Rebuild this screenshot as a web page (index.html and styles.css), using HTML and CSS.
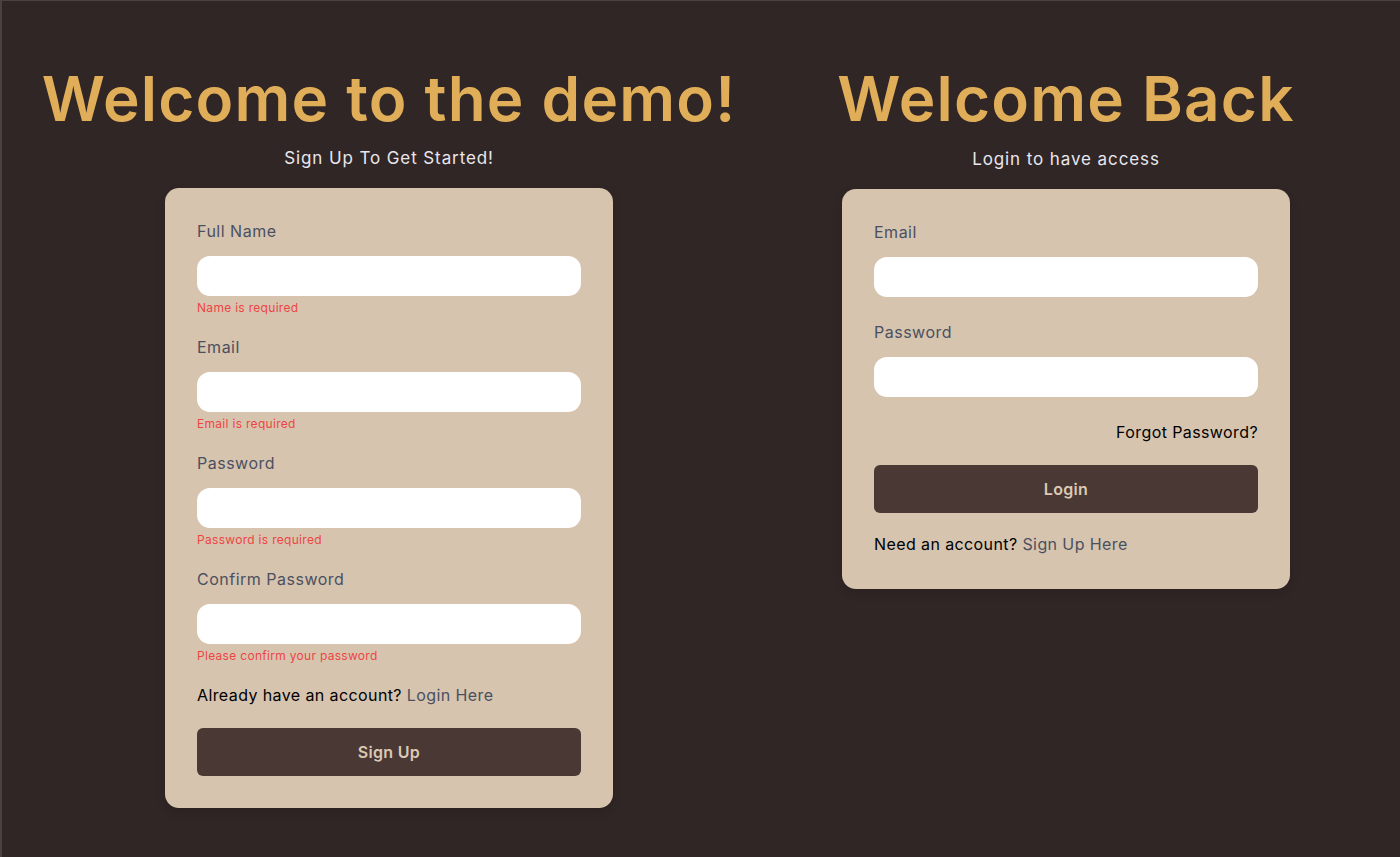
FILE: index.html
```html
<!DOCTYPE html>
<html lang="en">
<head>
<meta charset="utf-8">
<title>Auth Demo</title>
<link rel="stylesheet" href="styles.css">
</head>
<body>
<main class="page">
  <section class="col col-left">
    <h1 class="title">Welcome to the demo!</h1>
    <p class="subtitle">Sign Up To Get Started!</p>
    <form class="card">
      <div class="field">
        <label class="label">Full Name</label>
        <input class="input" type="text">
        <p class="error">Name is required</p>
      </div>
      <div class="field">
        <label class="label">Email</label>
        <input class="input" type="email">
        <p class="error">Email is required</p>
      </div>
      <div class="field">
        <label class="label">Password</label>
        <input class="input" type="password">
        <p class="error">Password is required</p>
      </div>
      <div class="field">
        <label class="label">Confirm Password</label>
        <input class="input" type="password">
        <p class="error">Please confirm your password</p>
      </div>
      <p class="switch">Already have an account? <a class="link" href="#">Login Here</a></p>
      <button class="btn" type="button">Sign Up</button>
    </form>
  </section>
  <section class="col col-right">
    <h1 class="title">Welcome Back</h1>
    <p class="subtitle">Login to have access</p>
    <form class="card">
      <div class="field field-plain">
        <label class="label">Email</label>
        <input class="input" type="email">
      </div>
      <div class="field field-plain">
        <label class="label">Password</label>
        <input class="input" type="password">
      </div>
      <p class="forgot">Forgot Password?</p>
      <button class="btn" type="button">Login</button>
      <p class="switch switch-bottom">Need an account? <a class="link" href="#">Sign Up Here</a></p>
    </form>
  </section>
</main>
</body>
</html>
```

FILE: styles.css
```css
* { box-sizing: border-box; }
html, body { margin: 0; padding: 0; }
body {
  background: #302625;
  font-family: "Inter", "Open Sans", sans-serif;
  height: 857px;
  overflow: hidden;
  border-left: 2px solid #4a4240;
  border-top: 1px solid #4a4240;
}
.page {
  display: flex;
  align-items: flex-start;
  padding-left: 40px;
}
.col {
  display: flex;
  flex-direction: column;
  align-items: center;
}
.col-left { width: 694px; }
.col-right { width: 460px; margin-left: 100px; }
.title {
  margin: 51px 0 0;
  font-size: 62px;
  line-height: 94px;
  font-weight: 600;
  color: #e0ad59;
  white-space: nowrap;
  letter-spacing: 1.2px;
}
.subtitle {
  margin: 0;
  font-size: 17px;
  line-height: 24px;
  letter-spacing: 0.9px;
  color: #e9e6ee;
}
.col-right .subtitle { margin-top: 1px; }
.card {
  margin-top: 18px;
  width: 448px;
  background: #d6c4af;
  border-radius: 14px;
  padding: 31px 32px 32px;
  box-shadow: 0 4px 10px rgba(0,0,0,0.15);
  display: flex;
  flex-direction: column;
}
.col-right .card { padding-bottom: 33px; }
.field {
  display: flex;
  flex-direction: column;
  margin-bottom: 19px;
}
.field-plain { margin-bottom: 23px; }
.label {
  font-size: 16px;
  line-height: 24px;
  letter-spacing: 0.5px;
  color: #4b5060;
  margin-bottom: 13px;
}
.input {
  height: 40px;
  border: none;
  border-radius: 13px;
  background: #ffffff;
  outline: none;
  padding: 0 14px;
  font: inherit;
}
.error {
  margin: 4px 0 0;
  font-size: 12px;
  line-height: 16px;
  letter-spacing: 0.3px;
  color: #ef4444;
}
.switch {
  margin: 0 0 21px;
  font-size: 16px;
  line-height: 24px;
  letter-spacing: 0.4px;
  color: #000;
}
.switch-bottom { margin: 19px 0 0; }
.link {
  color: #4b5060;
  text-decoration: none;
}
.forgot {
  margin: 0 0 21px;
  text-align: right;
  font-size: 16px;
  line-height: 24px;
  letter-spacing: 0.4px;
  color: #000;
}
.btn {
  height: 48px;
  border: none;
  border-radius: 6px;
  background: #4a3835;
  color: #dcc9b3;
  font: inherit;
  font-size: 16px;
  font-weight: 600;
  letter-spacing: 0.3px;
  cursor: pointer;
}
```
